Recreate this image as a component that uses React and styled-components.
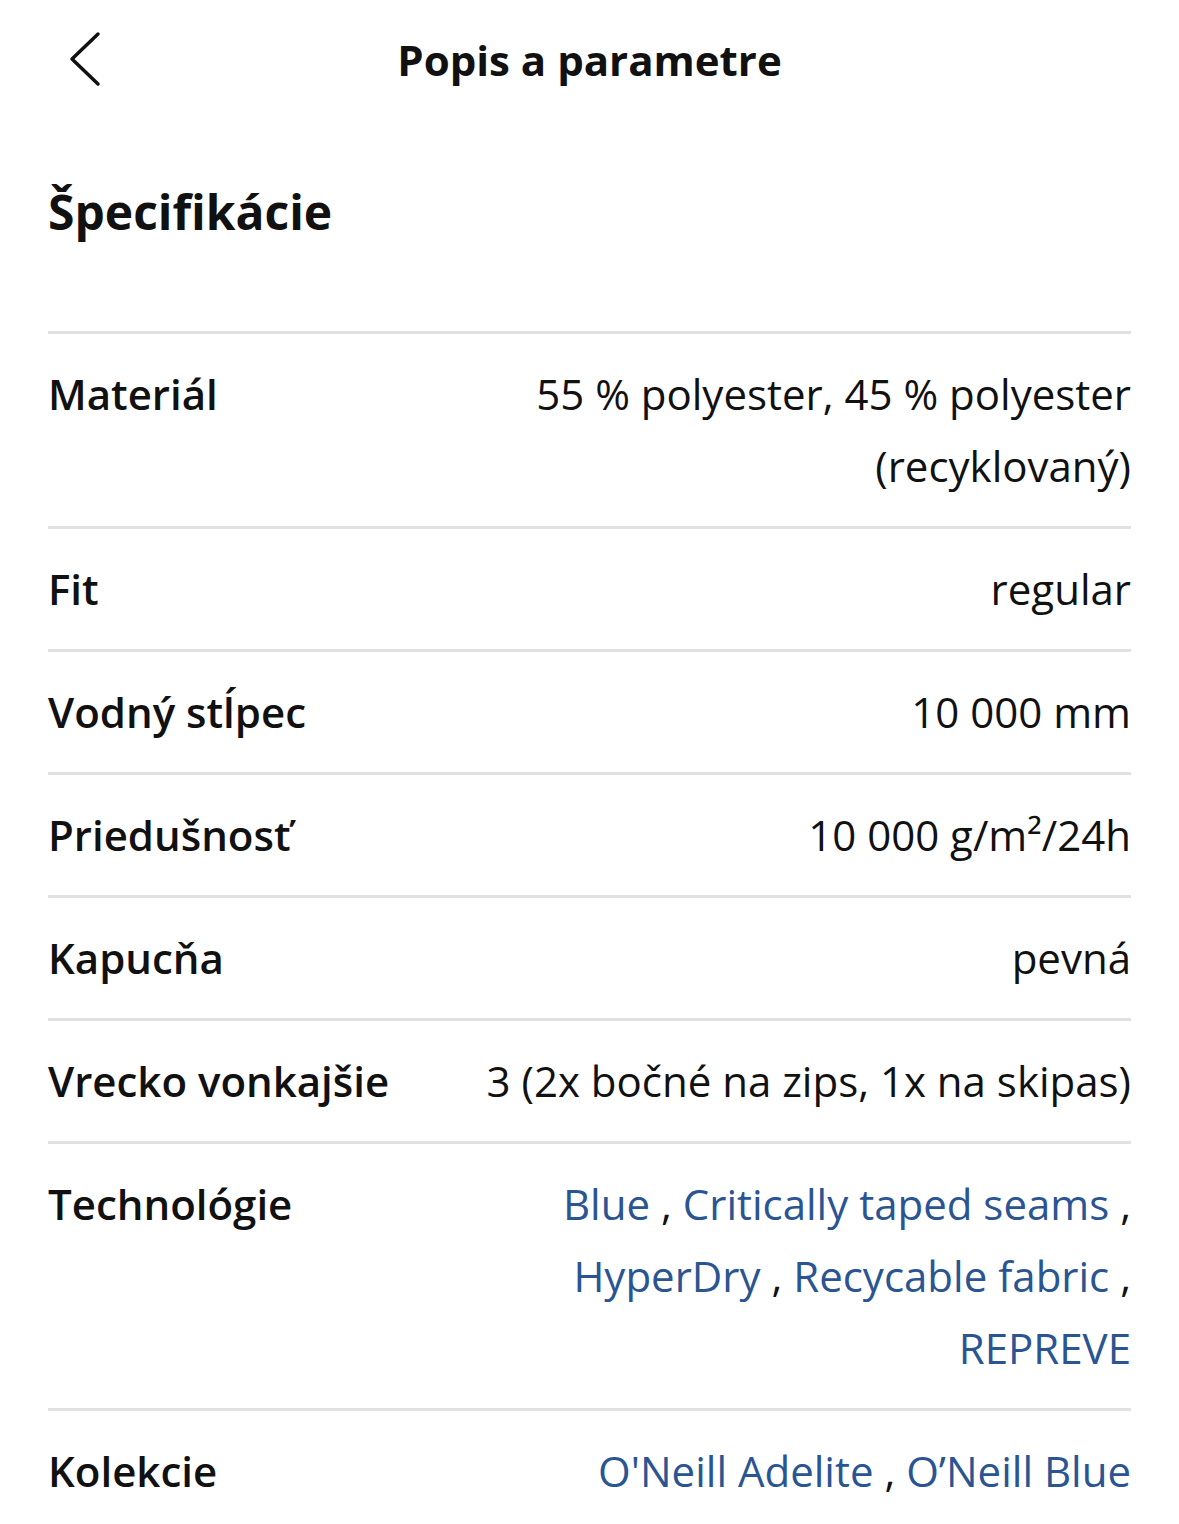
import React from "react";
import styled, { createGlobalStyle } from "styled-components";

const GlobalStyle = createGlobalStyle`
    body {
        margin: 0;
        background: #fff;
        font-family: "Open Sans", "Noto Sans", sans-serif;
        color: #111;
    }
`;

const Page = styled.div`
    padding: 0 48px;
`;

const TopBar = styled.header`
    height: 118px;
    display: flex;
    align-items: center;
    justify-content: center;
    position: relative;

    h1 {
        margin: 0;
        font-size: 42px;
        font-weight: 700;
    }
`;

const Back = styled.button`
    position: absolute;
    left: 14px;
    top: 28px;
    background: none;
    border: 0;
    padding: 0;
    width: 50px;
    height: 62px;
`;

const Heading = styled.h2`
    margin: 0;
    padding: 62px 0 87px;
    font-size: 48px;
    font-weight: 700;
    line-height: 64px;
`;

const Table = styled.section`
    display: flex;
    flex-direction: column;
`;

const Row = styled.div`
    display: flex;
    justify-content: space-between;
    gap: 40px;
    border-top: 3px solid #e1e1e1;
    padding: 24px 0 24px;
    font-size: 42px;
    line-height: 72px;
`;

const Label = styled.div`
    font-weight: 600;
    white-space: nowrap;
`;

const Value = styled.div`
    text-align: right;
    max-width: ${(props) => props.$max || "none"};
`;

const Link = styled.a`
    color: #2a5592;
    text-decoration: none;
`;

const links = (items) =>
    items.map((item, i) => (
        <React.Fragment key={item}>
            <Link href="#">{item}</Link>
            {i < items.length - 1 ? " , " : ""}
        </React.Fragment>
    ));

const rows = [
    { label: "Materiál", value: "55 % polyester, 45 % polyester (recyklovaný)", max: "610px" },
    { label: "Fit", value: "regular" },
    { label: "Vodný stĺpec", value: "10 000 mm" },
    { label: "Priedušnosť", value: "10 000 g/m²/24h" },
    { label: "Kapucňa", value: "pevná" },
    { label: "Vrecko vonkajšie", value: "3 (2x bočné na zips, 1x na skipas)" },
    {
        label: "Technológie",
        links: ["Blue", "Critically taped seams", "HyperDry", "Recycable fabric", "REPREVE"],
        max: "600px",
    },
    { label: "Kolekcie", links: ["O'Neill Adelite", "O’Neill Blue"] },
];

const App = () => {
    return (
        <Page>
            <GlobalStyle />
            <TopBar>
                <Back aria-label="Späť">
                    <svg width="50" height="62" viewBox="0 0 50 62">
                        <polyline
                            points="36,6 10,31 36,56"
                            fill="none"
                            stroke="#111"
                            strokeWidth="3.5"
                            strokeLinecap="round"
                            strokeLinejoin="round"
                        />
                    </svg>
                </Back>
                <h1>Popis a parametre</h1>
            </TopBar>
            <Heading>Špecifikácie</Heading>
            <Table>
                {rows.map((row) => (
                    <Row key={row.label}>
                        <Label>{row.label}</Label>
                        <Value $max={row.max}>
                            {row.links ? links(row.links) : row.value}
                        </Value>
                    </Row>
                ))}
            </Table>
        </Page>
    );
};

export default App;
